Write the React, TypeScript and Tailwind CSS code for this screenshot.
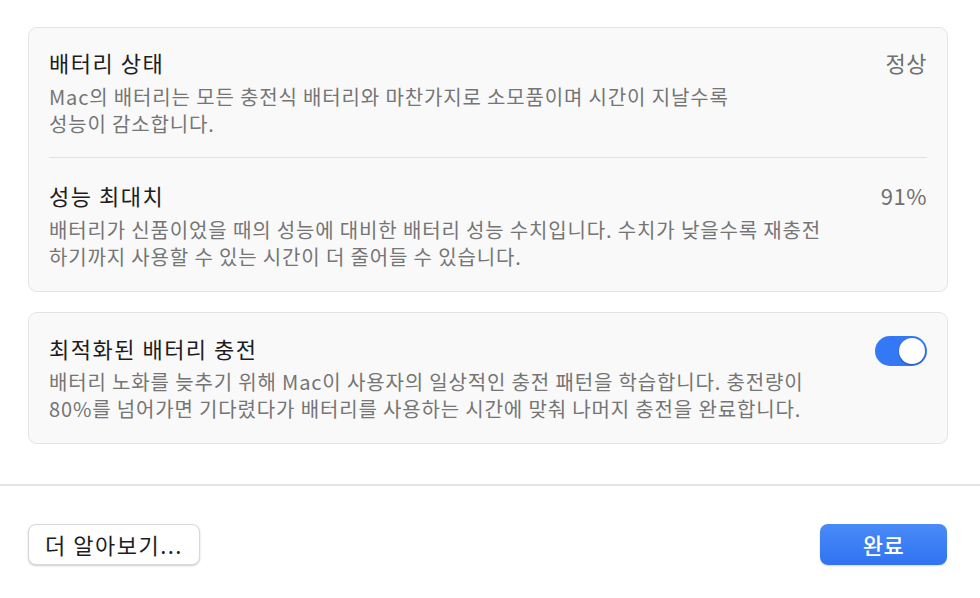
import React from 'react';

const font = { fontFamily: '"Noto Sans CJK KR", "Noto Sans", sans-serif' };

const Row = ({ title, desc, right, gap }: { title: string; desc: React.ReactNode; right: React.ReactNode; gap: string }) => (
  <div className="flex items-start justify-between gap-6">
    <div className="flex flex-col">
      <div className="text-[22px] leading-[28px] tracking-[1.5px] text-[#1d1d1f]">{title}</div>
      <div className={`${gap} text-[20px] leading-[27px] tracking-[0.85px] text-[#757575]`}>{desc}</div>
    </div>
    <div className="shrink-0">{right}</div>
  </div>
);

const Toggle = () => (
  <div className="mt-[2px] flex h-[30px] w-[52px] items-center justify-end rounded-full bg-[#3478f6] p-[2px]">
    <div className="h-[26px] w-[26px] rounded-full bg-white shadow-[0_1px_2px_rgba(0,0,0,0.3)]" />
  </div>
);

const Value = ({ children }: { children: React.ReactNode }) => (
  <div className="text-[22px] leading-[28px] tracking-[0.5px] text-[#707070]">{children}</div>
);

export default function App() {
  return (
    <div className="flex h-[598px] w-[980px] flex-col bg-white" style={font}>
      <div className="flex flex-col gap-[20px] pl-[28px] pr-[32px] pt-[27px]">
        <div className="rounded-[9px] border border-[#e4e4e4] bg-[#f9f9f9] px-[20px]">
          <div className="pt-[20px] pb-[20px]">
            <Row
              gap="mt-[7px]"
              title="배터리 상태"
              desc={<>Mac의 배터리는 모든 충전식 배터리와 마찬가지로 소모품이며 시간이 지날수록<br />성능이 감소합니다.</>}
              right={<Value>정상</Value>}
            />
          </div>
          <div className="h-px bg-[#e2e2e2]" />
          <div className="pt-[23px] pb-[21px]">
            <Row
              gap="mt-[7px]"
              title="성능 최대치"
              desc={<>배터리가 신품이었을 때의 성능에 대비한 배터리 성능 수치입니다. 수치가 낮을수록 재충전<br />하기까지 사용할 수 있는 시간이 더 줄어들 수 있습니다.</>}
              right={<Value>91%</Value>}
            />
          </div>
        </div>
        <div className="rounded-[9px] border border-[#e4e4e4] bg-[#f9f9f9] px-[20px] pt-[21px] pb-[21px]">
          <Row
            gap="mt-[6px]"
            title="최적화된 배터리 충전"
            desc={<>배터리 노화를 늦추기 위해 Mac이 사용자의 일상적인 충전 패턴을 학습합니다. 충전량이<br />80%를 넘어가면 기다렸다가 배터리를 사용하는 시간에 맞춰 나머지 충전을 완료합니다.</>}
            right={<Toggle />}
          />
        </div>
      </div>
      <div className="mt-[40px] h-[2px] bg-[#e3e3e3]" />
      <div className="flex items-center justify-between pl-[28px] pr-[33px] pt-[38px]">
        <button className="flex h-[41px] w-[172px] items-center justify-center rounded-[8px] border border-[#d8d8d8] bg-white text-[22px] tracking-[1.5px] text-[#1d1d1f] shadow-[0_1px_2px_rgba(0,0,0,0.2)]">
          더 알아보기...
        </button>
        <button className="flex h-[41px] w-[127px] items-center justify-center rounded-[8px] bg-gradient-to-b from-[#4a8af8] to-[#2f73f1] text-[22px] font-medium tracking-[0.5px] text-white shadow-[0_1px_2px_rgba(0,0,0,0.15)]">
          완료
        </button>
      </div>
    </div>
  );
}
